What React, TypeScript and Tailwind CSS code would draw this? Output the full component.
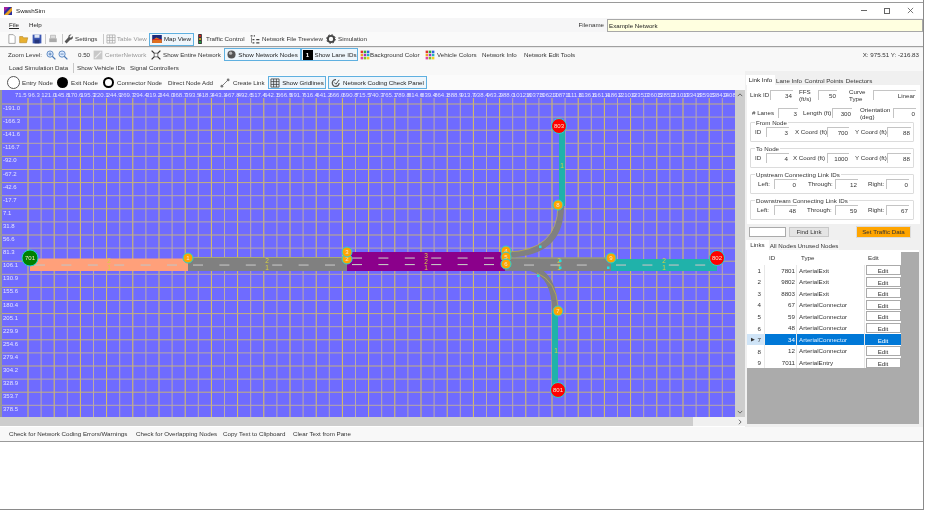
import React from "react";

const xLabels = Array.from({ length: 55 }, (_, i) => ({
  x: 15 + i * 13.1,
  t: i === 54 ? "1408" : (71.5 + i * 24.77).toFixed(1),
}));
const yLabels = [
  "-191.0", "-166.3", "-141.6", "-116.7", "-92.0", "-67.2", "-42.6", "-17.7", "7.1", "31.8", "56.6", "81.3",
  "106.1", "130.9", "155.6", "180.4", "205.1", "229.9", "254.6", "279.4", "304.2", "328.9", "353.7", "378.5",
];
const vLines = Array.from({ length: 54 }, (_, i) => 28 + i * 13.1);
const hLines = Array.from({ length: 24 }, (_, i) => 105 + i * 13.1);

const links = [
  ["1", "7801", "ArterialExit"],
  ["2", "9802", "ArterialExit"],
  ["3", "8803", "ArterialExit"],
  ["4", "67", "ArterialConnector"],
  ["5", "59", "ArterialConnector"],
  ["6", "48", "ArterialConnector"],
  ["7", "34", "ArterialConnector"],
  ["8", "12", "ArterialConnector"],
  ["9", "7011", "ArterialEntry"],
];

function dashes(from: number, to: number, y: number) {
  const out = [];
  for (let x = from; x < to; x += 26.4) {
    out.push(<rect key={x + "-" + y} x={x} y={y} width={10} height={1.1} fill="#c4c4c4" />);
  }
  return out;
}

function Node({ x, y, r, fill, label }: { x: number; y: number; r: number; fill: string; label: string }) {
  return (
    <g>
      <circle cx={x} cy={y} r={r} fill={fill} stroke="#22d3d3" strokeWidth={1} />
      <text x={x} y={y + 2} fontSize={6} fill="#f6e6d0" textAnchor="middle">
        {label}
      </text>
    </g>
  );
}

function LaneNo({ x, y, t }: { x: number; y: number; t: string }) {
  return (
    <text x={x} y={y} fontSize={6.5} fill="#d8d040" textAnchor="middle">
      {t}
    </text>
  );
}

function MapCanvas() {
  return (
    <svg viewBox="2 91 733 327" className="block w-[733px] h-[327px]" fontFamily="Liberation Sans, sans-serif">
      <rect x="2" y="91" width="733" height="327" fill="#6f6bff" />
      {vLines.map((x, i) => (
        <line key={x} x1={x} x2={x} y1={99} y2={418} stroke={i % 2 === 0 ? "#dcc25a" : "#bcaaa8"} strokeWidth={1} />
      ))}
      {hLines.map((y, i) => (
        <line key={y} x1={2} x2={735} y1={y} y2={y} stroke={i % 2 === 0 ? "#c4b07c" : "#b8a8a4"} strokeWidth={1} />
      ))}
      {xLabels.map((l) => (
        <text key={l.x} x={l.x} y={98} fontSize={6} fill="#e4e4ff">
          {l.t}
        </text>
      ))}
      {yLabels.map((t, i) => (
        <text key={t} x={3} y={111 + i * 13.1} fontSize={6} fill="#e4e4ff">
          {t}
        </text>
      ))}

      <rect x="30" y="259.5" width="158" height="12.5" fill="#ffa07a" />
      <rect x="188" y="258" width="159" height="14" fill="#808080" />
      <rect x="188" y="258" width="159" height="1" fill="#a8a878" />
      <rect x="347" y="253" width="158" height="19" fill="#8b008b" />
      <rect x="505" y="258.5" width="106" height="13.5" fill="#808080" />
      <rect x="505" y="258.5" width="106" height="1" fill="#a8a878" />
      <rect x="611" y="260" width="106" height="12" fill="#20b2aa" />
      <rect x="559" y="127" width="6" height="80" fill="#20b2aa" />
      <rect x="552" y="312" width="6" height="78" fill="#20b2aa" />
      <path d="M507 255.5 Q561 255 561 207" fill="none" stroke="#808080" strokeWidth={6} />
      <path d="M507 253 Q557 252 558 207" fill="none" stroke="#c8b840" strokeWidth={0.7} />
      <path d="M531 269 Q555 276 555 312" fill="none" stroke="#808080" strokeWidth={6} />
      <path d="M537 274 Q556 282 558 307" fill="none" stroke="#c8b840" strokeWidth={0.7} />

      {dashes(35, 180, 265.5)}
      {dashes(193, 340, 265.5)}
      {dashes(352, 500, 258.5)}
      {dashes(352, 500, 265)}
      {dashes(524, 600, 265.5)}
      {dashes(616, 710, 265.5)}

      <LaneNo x={109} y={264} t="2" />
      <LaneNo x={109} y={271} t="1" />
      <LaneNo x={267} y={264} t="2" />
      <LaneNo x={267} y={271} t="1" />
      <LaneNo x={426} y={259} t="3" />
      <LaneNo x={426} y={265} t="2" />
      <LaneNo x={426} y={271} t="1" />
      <LaneNo x={559} y={264} t="2" />
      <LaneNo x={559} y={271} t="1" />
      <LaneNo x={664} y={264} t="2" />
      <LaneNo x={664} y={271} t="1" />
      <LaneNo x={562} y={169} t="1" />
      <LaneNo x={556} y={354} t="1" />

      <rect x="539" y="246.5" width="2.5" height="2.5" fill="#22e0e0" />
      <rect x="559" y="260.5" width="2.5" height="2.5" fill="#22e0e0" />
      <rect x="559" y="267.5" width="2.5" height="2.5" fill="#22e0e0" />
      <rect x="607" y="267.5" width="2.5" height="2.5" fill="#22e0e0" />
      <rect x="537" y="275.5" width="2.5" height="2.5" fill="#22e0e0" />

      <Node x={188} y={259} r={5} fill="#ffa500" label="1" />
      <Node x={347} y={260} r={5} fill="#ffa500" label="2" />
      <Node x={347} y={253} r={5} fill="#ffa500" label="3" />
      <Node x={506} y={252} r={5} fill="#ffa500" label="4" />
      <Node x={506} y={258} r={5} fill="#ffa500" label="5" />
      <Node x={506} y={265} r={5} fill="#ffa500" label="6" />
      <Node x={558} y={312} r={5} fill="#ffa500" label="7" />
      <Node x={558} y={206} r={5} fill="#ffa500" label="8" />
      <Node x={611} y={259} r={5} fill="#ffa500" label="9" />
      <Node x={30} y={259} r={8} fill="#008000" label="701" />
      <Node x={717} y={259} r={7.5} fill="#ff0000" label="802" />
      <Node x={559} y={127} r={7.5} fill="#ff0000" label="803" />
      <Node x={558} y={391} r={7.5} fill="#ff0000" label="801" />
    </svg>
  );
}

function Ico({ children }: { children: React.ReactNode }) {
  return (
    <svg viewBox="0 0 16 16" className="w-[10px] h-[10px] shrink-0">
      {children}
    </svg>
  );
}

function Palette() {
  const c = ["#e03030", "#30b030", "#3060e0", "#f0a020", "#a030c0", "#20b0c0", "#e040a0", "#80c020", "#f0d020"];
  return (
    <Ico>
      {c.map((f, i) => (
        <rect key={f} x={1 + (i % 3) * 5} y={1 + Math.floor(i / 3) * 5} width={4} height={4} fill={f} />
      ))}
    </Ico>
  );
}

function GridIco({ color }: { color: string }) {
  return (
    <Ico>
      <path d="M1.5 1.5h13v13h-13zM1.5 5.8h13M1.5 10.2h13M5.8 1.5v13M10.2 1.5v13" fill="none" stroke={color} strokeWidth={1.2} />
    </Ico>
  );
}

function Sep() {
  return <span className="block w-px h-[10px] bg-[#c8c8c8] shrink-0" />;
}

function Lit({ className, children }: { className: string; children: React.ReactNode }) {
  return (
    <span className={"flex items-center gap-[2px] h-[13px] border border-[#5fb0e0] bg-[#eef6fc] justify-center shrink-0 " + className}>
      {children}
    </span>
  );
}

function Inp({ className, v }: { className: string; v?: string }) {
  return (
    <span className={"block h-[10px] bg-white border-t border-l border-[#c4c4c4] text-right leading-[10px] pr-[1px] shrink-0 " + className}>
      {v}
    </span>
  );
}

function Group({ title, children }: { title: string; children: React.ReactNode }) {
  return (
    <div className="relative h-[20px] w-[164px] border border-[#dcdcdc] rounded-[1px] flex items-center text-[#333]">
      <span className="absolute left-[4px] top-[-5px] bg-white px-[1px] leading-[9px]">{title}</span>
      {children}
    </div>
  );
}

function TopBar() {
  return (
    <>
      <div className="h-[3px] bg-white border-b border-[#9a9a9a]" />
      <div className="h-[15px] bg-white flex items-center pl-[4px] pr-[9px]">
        <svg viewBox="0 0 8 8" className="w-[8px] h-[8px]">
          <rect width="8" height="8" fill="#2b2f9e" />
          <path d="M0 8L8 0V4L4 8Z" fill="#e8a020" />
          <path d="M0 0H5L0 5Z" fill="#a020a0" />
        </svg>
        <span className="ml-[4px] text-[#222]">SwashSim</span>
        <span className="ml-auto flex items-center gap-[17px] text-[#333]">
          <span className="w-[6px] h-px bg-[#666]" />
          <span className="w-[6px] h-[6px] border border-[#666]" />
          <svg viewBox="0 0 8 8" className="w-[7px] h-[7px]">
            <path d="M1 1L7 7M7 1L1 7" stroke="#555" strokeWidth={0.9} />
          </svg>
        </span>
      </div>
      <div className="h-[14px] bg-[#f6f6f7] flex items-center text-[#222] pl-[9px]">
        <span className="underline decoration-[0.5px]">File</span>
        <span className="ml-[10px]">Help</span>
        <span className="ml-auto text-[#333]">Filename</span>
        <span className="ml-[3px] w-[316px] h-[13px] bg-[#ffffe0] border border-[#a8a8a8] leading-[11px] pl-[1px] text-[#222]">
          Example Network
        </span>
      </div>
      <div className="h-[14px] bg-[#fafafa] flex items-center text-[#333] pl-[7px]">
        <Ico>
          <path d="M3 1h7l3 3v11H3z" fill="#fff" stroke="#777" strokeWidth={1} />
        </Ico>
        <span className="ml-[2px]">
          <Ico>
            <path d="M1 4h5l1 2h7l-2 8H1z" fill="#e8b030" stroke="#a87818" strokeWidth={0.8} />
          </Ico>
        </span>
        <span className="ml-[3px]">
          <Ico>
            <path d="M1 1h14v14H1z" fill="#3a55b0" />
            <path d="M4 1h8v5H4z" fill="#dfe6f5" />
            <path d="M4 9h8v6H4z" fill="#24357a" />
          </Ico>
        </span>
        <span className="ml-[3px]">
          <Sep />
        </span>
        <span className="ml-[2px]">
          <Ico>
            <path d="M2 7h12v6H2z" fill="#aaa" />
            <path d="M4 2h8v5H4z" fill="#ddd" stroke="#aaa" />
          </Ico>
        </span>
        <span className="ml-[4px]">
          <Sep />
        </span>
        <span className="ml-[1px]">
          <Ico>
            <path d="M14 3l-3 3-2-1 0-2 3-2c-3-1-5 1-5 4L1 12l3 3 6-6c3 0 5-2 4-6z" fill="#555" />
          </Ico>
        </span>
        <span className="ml-[1px] w-[28px]">Settings</span>
        <Sep />
        <span className="ml-[2px]">
          <GridIco color="#aaa" />
        </span>
        <span className="ml-[1px] w-[32px] text-[#999]">Table View</span>
        <Lit className="w-[45px]">
          <svg viewBox="0 0 12 10" className="w-[10px] h-[8px]">
            <rect width="12" height="10" fill="#1c2a7c" />
            <path d="M0 7L5 3 12 6V10H0z" fill="#e07020" />
            <path d="M0 5h12v1H0z" fill="#e02020" />
          </svg>
          <span className="text-[#222]">Map View</span>
        </Lit>
        <span className="ml-[1px]">
          <Ico>
            <rect x="5" y="0" width="6" height="16" rx="1" fill="#333" />
            <circle cx="8" cy="3" r="1.7" fill="#e02020" />
            <circle cx="8" cy="8" r="1.7" fill="#e8c020" />
            <circle cx="8" cy="13" r="1.7" fill="#20b040" />
          </Ico>
        </span>
        <span className="ml-[1px] w-[44px]">Traffic Control</span>
        <Ico>
          <path d="M1 2h3v2H1zM6 2h2v2H6zM4 8h3v2H4zM10 8h5v2h-5zM4 13h3v2H4zM10 13h5v2h-5zM2 5v9h1V5z" fill="#444" />
        </Ico>
        <span className="ml-[2px] w-[64px]">Network File Treeview</span>
        <Ico>
          <circle cx="8" cy="8" r="5" fill="none" stroke="#444" strokeWidth={3} />
          <circle cx="8" cy="8" r="7" fill="none" stroke="#444" strokeWidth={1.6} strokeDasharray="2.4 3.1" />
        </Ico>
        <span className="ml-[2px]">Simulation</span>
      </div>
      <div className="h-[2px] bg-[#e8e8e8] border-t border-[#a0a0a0]" />
      <div className="h-[13px] bg-[#f8f8f8] flex items-center text-[#333] pl-[8px] pr-[4px]">
        <span className="w-[38px]">Zoom Level:</span>
        <Ico>
          <circle cx="6.5" cy="6.5" r="5" fill="#dcebff" stroke="#4a7ab8" strokeWidth={1.3} />
          <path d="M10 10l5 5" stroke="#4a7ab8" strokeWidth={2} />
          <path d="M4 6.5h5M6.5 4v5" stroke="#2a5a98" strokeWidth={1} />
        </Ico>
        <span className="ml-[2px]">
          <Ico>
            <circle cx="6.5" cy="6.5" r="5" fill="#dcebff" stroke="#4a7ab8" strokeWidth={1.3} />
            <path d="M10 10l5 5" stroke="#4a7ab8" strokeWidth={2} />
            <path d="M4 6.5h5" stroke="#2a5a98" strokeWidth={1} />
          </Ico>
        </span>
        <span className="ml-[10px] w-[15px]">0.50</span>
        <Ico>
          <rect x="1" y="1" width="14" height="14" fill="#c8c8c8" />
          <path d="M3 13L13 3" stroke="#eee" strokeWidth={2} />
        </Ico>
        <span className="ml-[2px] w-[46px] text-[#999]">CenterNetwork</span>
        <Ico>
          <path d="M1 1l4 4M15 1l-4 4M1 15l4-4M15 15l-4-4" stroke="#333" strokeWidth={2} />
          <rect x="5" y="5" width="6" height="6" fill="none" stroke="#333" />
        </Ico>
        <span className="ml-[2px] w-[61px]">Show Entire Network</span>
        <Lit className="w-[77px]">
          <svg viewBox="0 0 10 10" className="w-[9px] h-[9px]">
            <circle cx="5" cy="5" r="4.5" fill="#555" />
            <circle cx="4" cy="3.5" r="1.8" fill="#b8b8b8" />
          </svg>
          <span className="text-[#222]">Show Network Nodes</span>
        </Lit>
        <Lit className="w-[57px]">
          <span className="w-[10px] h-[10px] bg-black text-white text-center leading-[10px] font-bold">1</span>
          <span className="text-[#222]">Show Lane IDs</span>
        </Lit>
        <span className="ml-[2px]">
          <Palette />
        </span>
        <span className="w-[55px]">Background Color</span>
        <Palette />
        <span className="ml-[2px] w-[45px]">Vehicle Colors</span>
        <span className="w-[42px]">Network Info</span>
        <span>Network Edit Tools</span>
        <span className="ml-auto">X: 975.51 Y: -216.83</span>
      </div>
      <div className="h-[14px] bg-[#f8f8f8] flex items-center text-[#333] pl-[9px]">
        <span className="w-[64px]">Load Simulation Data</span>
        <Sep />
        <span className="ml-[3px] w-[53px]">Show Vehicle IDs</span>
        <span>Signal Controllers</span>
      </div>
    </>
  );
}

function MapPane() {
  return (
    <div className="w-[745px] shrink-0 flex flex-col">
      <div className="h-[15px] bg-[#fbfbfb] flex items-center text-[#333] pl-[7px]">
        <span className="w-[13px] h-[13px] rounded-full bg-white border border-[#555] shrink-0" />
        <span className="ml-[2px] w-[35px]">Entry Node</span>
        <span className="w-[11px] h-[11px] rounded-full bg-black shrink-0" />
        <span className="ml-[3px] w-[32px]">Exit Node</span>
        <span className="w-[11px] h-[11px] rounded-full bg-white border-[2.5px] border-black shrink-0" />
        <span className="ml-[3px] w-[51px]">Connector Node</span>
        <span className="w-[52px]">Direct Node Add</span>
        <Ico>
          <path d="M3 13L13 3" stroke="#777" strokeWidth={1.5} />
          <circle cx="3" cy="13" r="2.2" fill="#777" />
          <circle cx="13" cy="3" r="2.2" fill="#777" />
        </Ico>
        <span className="ml-[3px] w-[35px]">Create Link</span>
        <Lit className="w-[58px]">
          <GridIco color="#333" />
          <span className="text-[#222]">Show Gridlines</span>
        </Lit>
        <Lit className="w-[99px] ml-[2px]">
          <Ico>
            <path d="M13 8A5.5 5.5 0 1 1 8 2.5" fill="none" stroke="#555" strokeWidth={2} />
            <path d="M5 7l3 3 5-7" fill="none" stroke="#555" strokeWidth={1.6} />
          </Ico>
          <span className="text-[#222]">Network Coding Check Panel</span>
        </Lit>
      </div>
      <div className="flex h-[327px] pl-[2px] bg-[#999]">
        <MapCanvas />
        <div className="w-[10px] bg-[#cdcdcd] flex flex-col items-center justify-between py-[3px]">
          <svg viewBox="0 0 8 5" className="w-[6px] h-[4px]">
            <path d="M1 4l3-3 3 3" fill="none" stroke="#444" strokeWidth={1} />
          </svg>
          <svg viewBox="0 0 8 5" className="w-[6px] h-[4px]">
            <path d="M1 1l3 3 3-3" fill="none" stroke="#444" strokeWidth={1} />
          </svg>
        </div>
      </div>
      <div className="h-[9px] flex items-center bg-[#f0f0f0]">
        <span className="w-[693px] h-full bg-[#cdcdcd]" />
        <svg viewBox="0 0 5 8" className="ml-auto mr-[3px] w-[4px] h-[6px]">
          <path d="M1 1l3 3-3 3" fill="none" stroke="#444" strokeWidth={1} />
        </svg>
      </div>
    </div>
  );
}

function LinkInfo() {
  return (
    <div className="h-[139px] w-[173px] ml-[2px] bg-white pl-[3px] text-[#333]">
      <div className="h-[20px] flex items-center">
        <span className="w-[20px]">Link ID</span>
        <Inp className="w-[23px]" v="34" />
        <span className="w-[19px] ml-[6px] leading-[7px] whitespace-normal">FFS (ft/s)</span>
        <Inp className="w-[19px]" v="50" />
        <span className="w-[20px] ml-[12px] leading-[7px] whitespace-normal">Curve Type</span>
        <Inp className="w-[43px] ml-[4px]" v="Linear" />
      </div>
      <div className="h-[15px] flex items-center mb-[2px]">
        <span className="w-[26px] ml-[2px]">#&nbsp;Lanes</span>
        <Inp className="w-[20px]" v="3" />
        <span className="w-[29px] ml-[5px]">Length (ft)</span>
        <Inp className="w-[20px]" v="300" />
        <span className="w-[33px] ml-[8px] leading-[7px] whitespace-normal">Orientation (deg)</span>
        <Inp className="w-[23px]" v="0" />
      </div>
      <div className="flex flex-col gap-[6px]">
        <Group title="From Node">
          <span className="w-[15px] pl-[4px]">ID</span>
          <Inp className="w-[23px]" v="3" />
          <span className="w-[38px] pl-[6px]">X Coord (ft)</span>
          <Inp className="w-[22px]" v="700" />
          <span className="w-[38px] pl-[6px]">Y Coord (ft)</span>
          <Inp className="w-[24px]" v="88" />
        </Group>
        <Group title="To Node">
          <span className="w-[15px] pl-[4px]">ID</span>
          <Inp className="w-[23px]" v="4" />
          <span className="w-[38px] pl-[4px]">X Coord (ft)</span>
          <Inp className="w-[22px]" v="1000" />
          <span className="w-[38px] pl-[6px]">Y Coord (ft)</span>
          <Inp className="w-[24px]" v="88" />
        </Group>
        <Group title="Upstream Connecting Link IDs">
          <span className="w-[23px] pl-[7px]">Left:</span>
          <Inp className="w-[23px]" v="0" />
          <span className="w-[38px] pl-[11px]">Through:</span>
          <Inp className="w-[23px]" v="12" />
          <span className="w-[28px] pl-[10px]">Right:</span>
          <Inp className="w-[23px]" v="0" />
        </Group>
        <Group title="Downstream Connecting Link IDs">
          <span className="w-[23px] pl-[6px]">Left:</span>
          <Inp className="w-[23px]" v="48" />
          <span className="w-[38px] pl-[10px]">Through:</span>
          <Inp className="w-[23px]" v="59" />
          <span className="w-[28px] pl-[10px]">Right:</span>
          <Inp className="w-[23px]" v="67" />
        </Group>
      </div>
    </div>
  );
}

function LinksTable() {
  return (
    <div className="mx-[2px] w-[172px] h-[174px] bg-[#ababab] border-t-2 border-white text-[#333]">
      <div className="w-[154px] bg-white h-[12.5px] flex items-center">
        <span className="w-[18px]" />
        <span className="w-[32px] pl-[4px]">ID</span>
        <span className="pl-[4px]">Type</span>
        <span className="ml-auto w-[37px] pl-[4px]">Edit</span>
      </div>
      {links.map(([n, id, type]) => {
        const sel = n === "7";
        return (
          <div key={n} className="w-[154px] h-[11.55px] flex bg-[#e8e8e8] gap-px leading-[11px]">
            <span className={"w-[17px] pr-[3px] text-right flex items-center justify-end gap-[3px] " + (sel ? "bg-[#cfe4f7]" : "bg-white")}>
              {sel ? <span className="text-[5px]">▶</span> : null}
              {n}
            </span>
            <span className={"w-[31px] text-right pr-[1px] " + (sel ? "bg-[#0078d7] text-white" : "bg-white")}>{id}</span>
            <span className={"w-[67px] pl-[2px] " + (sel ? "bg-[#0078d7] text-[#dfefff]" : "bg-white")}>{type}</span>
            <span className={"flex-1 flex items-center justify-center " + (sel ? "bg-[#0078d7]" : "bg-white")}>
              <span className={"w-[35px] h-[10px] text-center leading-[9px] border " + (sel ? "border-[#0078d7] text-white" : "border-[#aaa] bg-white")}>
                Edit
              </span>
            </span>
          </div>
        );
      })}
    </div>
  );
}

function SidePanel() {
  return (
    <div className="flex-1 bg-[#f0f0f0] text-[#333] mt-[-4px] pt-[4px]">
      <div className="h-[10px] flex pl-[1px]">
        <span className="w-[29px] bg-white text-center leading-[10px] text-[#222]">Link Info</span>
        <span className="w-[28px] text-center leading-[11px]">Lane Info</span>
        <span className="w-[42px] text-center leading-[11px]">Control Points</span>
        <span className="w-[28px] text-center leading-[11px]">Detectors</span>
      </div>
      <LinkInfo />
      <div className="h-[16px] flex items-center pl-[4px]">
        <span className="w-[37px] h-[10px] bg-white border border-[#aaa]" />
        <span className="ml-[3px] w-[40px] h-[10px] bg-[#e4e4e4] border border-[#c8c8c8] text-center leading-[8px]">Find Link</span>
        <span className="ml-[27px] w-[55px] h-[12px] border-[1.5px] border-[#dcdcdc] bg-[#ffa500] text-center leading-[9px]">
          Set Traffic Data
        </span>
      </div>
      <div className="h-[10px] flex pl-[1px]">
        <span className="w-[23px] bg-white text-center leading-[9px]">Links</span>
        <span className="w-[28px] text-center leading-[11px] bg-[#f6f6f6]">All Nodes</span>
        <span className="w-[42px] text-center leading-[11px] bg-[#f6f6f6]">Unused Nodes</span>
      </div>
      <LinksTable />
    </div>
  );
}

export default function App() {
  return (
    <div className="w-[925px] h-[512px] overflow-hidden bg-white text-[6.2px] leading-[8px] whitespace-nowrap font-['Liberation_Sans',sans-serif] pr-[1px] blur-[0.3px]">
      <div className="h-[510px] border-r border-b border-[#8a8a8a] flex flex-col">
        <TopBar />
        <div className="flex h-[352px]">
          <MapPane />
          <SidePanel />
        </div>
        <div className="h-[14px] bg-[#f8f8f8] flex items-center text-[#333] pl-[9px]">
          <span className="w-[127px]">Check for Network Coding Errors/Warnings</span>
          <span className="w-[87px]">Check for Overlapping Nodes</span>
          <span className="w-[70px]">Copy Text to Clipboard</span>
          <span>Clear Text from Pane</span>
        </div>
        <div className="flex-1 bg-white border-t border-[#9a9a9a]" />
      </div>
    </div>
  );
}
